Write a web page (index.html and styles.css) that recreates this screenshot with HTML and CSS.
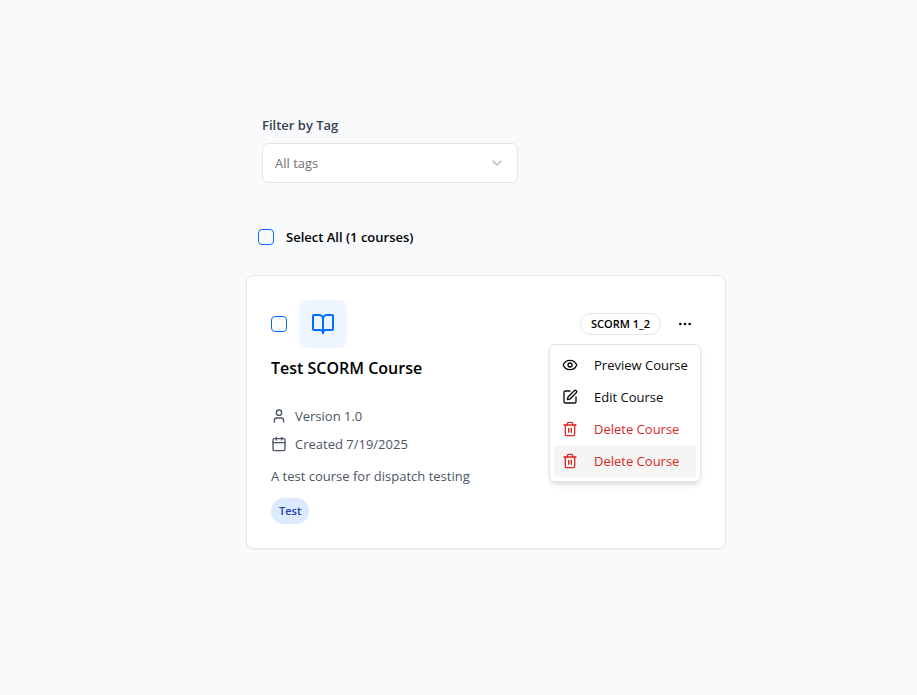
FILE: index.html
```html
<!DOCTYPE html>
<html lang="en">
<head>
<meta charset="utf-8">
<meta name="viewport" content="width=device-width, initial-scale=1">
<title>Courses</title>
<link rel="stylesheet" href="styles.css">
</head>
<body>
<main class="page">
  <section class="filter">
    <label class="filter-label" for="tag-filter">Filter by Tag</label>
    <div class="select-wrap">
      <select class="select" id="tag-filter">
        <option>All tags</option>
      </select>
      <svg class="icon chevron" viewBox="0 0 24 24" aria-hidden="true"><path d="m6 9 6 6 6-6"/></svg>
    </div>
  </section>

  <div class="select-all">
    <input class="checkbox" type="checkbox" id="select-all">
    <label for="select-all">Select All (1 courses)</label>
  </div>

  <article class="card">
    <header class="card-header">
      <input class="checkbox" type="checkbox" aria-label="Select Test SCORM Course">
      <span class="course-icon">
        <svg class="icon" viewBox="0 0 24 24" aria-hidden="true"><path d="M12 7v14"/><path d="M3 18a1 1 0 0 1-1-1V4a1 1 0 0 1 1-1h5a4 4 0 0 1 4 4 4 4 0 0 1 4-4h5a1 1 0 0 1 1 1v13a1 1 0 0 1-1 1h-6a3 3 0 0 0-3 3 3 3 0 0 0-3-3z"/></svg>
      </span>
      <div class="card-actions">
        <span class="badge">SCORM 1_2</span>
        <div class="menu-anchor">
          <button class="menu-button" type="button" aria-label="Course actions" aria-expanded="true">
            <svg class="icon" viewBox="0 0 24 24" aria-hidden="true"><circle cx="12" cy="12" r="1"/><circle cx="19" cy="12" r="1"/><circle cx="5" cy="12" r="1"/></svg>
          </button>
          <div class="menu" role="menu">
            <button class="menu-item" type="button" role="menuitem">
              <svg class="icon" viewBox="0 0 24 24" aria-hidden="true"><path d="M2.062 12.348a1 1 0 0 1 0-.696 10.75 10.75 0 0 1 19.876 0 1 1 0 0 1 0 .696 10.75 10.75 0 0 1-19.876 0"/><circle cx="12" cy="12" r="3"/></svg>
              Preview Course
            </button>
            <button class="menu-item" type="button" role="menuitem">
              <svg class="icon" viewBox="0 0 24 24" aria-hidden="true"><path d="M12 3H5a2 2 0 0 0-2 2v14a2 2 0 0 0 2 2h14a2 2 0 0 0 2-2v-7"/><path d="M18.375 2.625a1 1 0 0 1 3 3l-9.013 9.014a2 2 0 0 1-.853.505l-2.873.84a.5.5 0 0 1-.62-.62l.84-2.873a2 2 0 0 1 .506-.852z"/></svg>
              Edit Course
            </button>
            <button class="menu-item danger" type="button" role="menuitem">
              <svg class="icon" viewBox="0 0 24 24" aria-hidden="true"><path d="M3 6h18"/><path d="M19 6v14c0 1-1 2-2 2H7c-1 0-2-1-2-2V6"/><path d="M8 6V4c0-1 1-2 2-2h4c1 0 2 1 2 2v2"/><path d="M10 11v6"/><path d="M14 11v6"/></svg>
              Delete Course
            </button>
            <button class="menu-item danger active" type="button" role="menuitem">
              <svg class="icon" viewBox="0 0 24 24" aria-hidden="true"><path d="M3 6h18"/><path d="M19 6v14c0 1-1 2-2 2H7c-1 0-2-1-2-2V6"/><path d="M8 6V4c0-1 1-2 2-2h4c1 0 2 1 2 2v2"/><path d="M10 11v6"/><path d="M14 11v6"/></svg>
              Delete Course
            </button>
          </div>
        </div>
      </div>
    </header>

    <h2 class="card-title">Test SCORM Course</h2>

    <ul class="meta">
      <li class="meta-row">
        <svg class="icon" viewBox="0 0 24 24" aria-hidden="true"><path d="M19 21v-2a4 4 0 0 0-4-4H9a4 4 0 0 0-4 4v2"/><circle cx="12" cy="7" r="4"/></svg>
        Version 1.0
      </li>
      <li class="meta-row">
        <svg class="icon" viewBox="0 0 24 24" aria-hidden="true"><path d="M8 2v4"/><path d="M16 2v4"/><rect width="18" height="18" x="3" y="4" rx="2"/><path d="M3 10h18"/></svg>
        Created 7/19/2025
      </li>
    </ul>
    <p class="description">A test course for dispatch testing</p>
    <span class="tag">Test</span>
  </article>
</main>
</body>
</html>
```

FILE: styles.css
```css
* {
  box-sizing: border-box;
}

body {
  margin: 0;
  background: #f9fafb;
  color: #0a0a0a;
  font-family: "Open Sans", "Noto Sans", sans-serif;
  font-size: 13px;
  line-height: 20px;
}

button,
select {
  font: inherit;
}

.page {
  padding: 115px 191px 48px 246px;
}

.icon {
  display: block;
  flex: none;
  width: 16px;
  height: 16px;
  fill: none;
  stroke: currentColor;
  stroke-width: 2;
  stroke-linecap: round;
  stroke-linejoin: round;
}

.filter {
  max-width: 288px;
  padding: 0 16px;
}

.filter-label {
  display: block;
  margin-bottom: 8px;
  color: #374151;
  font-weight: 600;
}

.select-wrap {
  position: relative;
}

.select {
  display: block;
  width: 100%;
  height: 40px;
  padding: 0 36px 0 12px;
  appearance: none;
  border: 1px solid #e5e5e5;
  border-radius: 6px;
  background: #fff;
  color: #737373;
}

.chevron {
  position: absolute;
  top: 12px;
  right: 13px;
  opacity: 0.5;
  color: #737373;
  pointer-events: none;
}

.select-all {
  display: flex;
  align-items: center;
  gap: 12px;
  margin: 44px 12px 28px;
  color: #000;
  font-weight: 600;
}

.checkbox {
  flex: none;
  width: 16px;
  height: 16px;
  margin: 0;
  appearance: none;
  border: 1px solid #006fff;
  border-radius: 4px;
}

.checkbox:checked {
  background: #006fff;
}

.card {
  padding: 24px;
  border: 1px solid #e5e7eb;
  border-radius: 8px;
  background: #fff;
  box-shadow: 0 1px 2px rgb(0 0 0 / 5%);
}

.card-header {
  display: flex;
  align-items: center;
  gap: 12px;
}

.course-icon {
  padding: 12px;
  border-radius: 8px;
  background: #eff6ff;
  color: #006fff;
}

.course-icon .icon {
  width: 24px;
  height: 24px;
}

.card-actions {
  display: flex;
  align-items: center;
  gap: 8px;
  margin-left: auto;
}

.badge {
  padding: 2px 10px;
  border: 1px solid #e5e5e5;
  border-radius: 16px;
  color: #000;
  font-size: 11px;
  line-height: 16px;
  font-weight: 600;
}

.menu-anchor {
  position: relative;
}

.menu-button {
  display: block;
  padding: 8px;
  border: 0;
  background: none;
  color: inherit;
}

.menu {
  position: absolute;
  top: 100%;
  right: 0;
  width: 152px;
  margin-top: 4px;
  padding: 4px;
  border: 1px solid #e5e5e5;
  border-radius: 6px;
  background: #fff;
  box-shadow: 0 4px 6px -1px rgb(0 0 0 / 10%), 0 2px 4px -2px rgb(0 0 0 / 10%);
}

.menu-item {
  display: flex;
  align-items: center;
  gap: 16px;
  width: 100%;
  padding: 6px 8px;
  border: 0;
  border-radius: 4px;
  background: none;
  color: inherit;
  white-space: nowrap;
}

.danger {
  color: #dc2626;
}

.active {
  background: #f5f5f4;
}

.card-title {
  margin: 6px 0 24px;
  color: #000;
  font-size: 16px;
  line-height: 28px;
  font-weight: 600;
}

.meta {
  display: grid;
  gap: 8px;
  margin: 0;
  padding: 0;
  list-style: none;
  color: #4b5563;
}

.meta-row {
  display: flex;
  align-items: center;
  gap: 8px;
}

.description {
  margin: 12px 0;
  color: #4b5563;
}

.tag {
  display: block;
  width: fit-content;
  padding: 5px 8px;
  border-radius: 16px;
  background: #dbeafe;
  color: #1e40af;
  font-size: 11px;
  line-height: 16px;
  font-weight: 600;
}
```
